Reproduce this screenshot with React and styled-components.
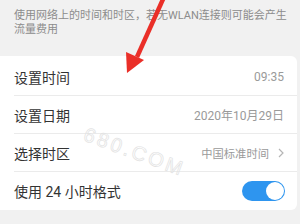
import React, { useState } from 'react';
import styled, { createGlobalStyle } from 'styled-components';

const GlobalStyle = createGlobalStyle`
  html, body {
    margin: 0;
    padding: 0;
    background: #f1f1f1;
  }
  body {
    font-family: Roboto, "Noto Sans CJK SC", sans-serif;
  }
`;

const Page = styled.div`
  position: relative;
  width: 300px;
  height: 224px;
  overflow: hidden;
  background: #f1f1f1;
`;

const Desc = styled.p`
  margin: 0;
  padding: 9px 14px 0;
  font-size: 11px;
  line-height: 13.5px;
  color: #8c8c8c;
  white-space: nowrap;
`;

const Card = styled.div`
  margin: 20px 3px 0 0;
  padding-top: 2px;
  background: #fff;
  border-radius: 0 6px 6px 0;
`;

const Row = styled.div`
  display: flex;
  align-items: center;
  justify-content: space-between;
  height: 38px;
  margin-left: 14px;
  padding-right: 13px;
  box-sizing: border-box;
  border-bottom: ${(p) => (p.$last ? 'none' : '1px solid #ebebeb')};
`;

const Label = styled.span`
  font-size: 14px;
  color: #333;
`;

const Value = styled.span`
  display: flex;
  align-items: center;
  gap: 9px;
  font-size: ${(p) => (p.$small ? '11.3px' : '12px')};
  color: #9a9a9a;
`;

const Toggle = styled.button`
  position: relative;
  width: 43px;
  height: 20px;
  margin-right: -1px;
  padding: 0;
  border: none;
  border-radius: 10px;
  background: ${(p) => (p.$on ? '#2e95ef' : '#ccc')};
  cursor: pointer;

  &::after {
    content: '';
    position: absolute;
    top: 1px;
    left: ${(p) => (p.$on ? '24px' : '1px')};
    width: 18px;
    height: 18px;
    border-radius: 50%;
    background: #fff;
  }
`;

const Watermark = styled.div`
  position: absolute;
  left: 88px;
  top: 124px;
  font-family: "Liberation Sans", sans-serif;
  font-size: 20px;
  line-height: 20px;
  letter-spacing: 3px;
  color: transparent;
  -webkit-text-stroke: 0.7px #e2e2e2;
  transform: rotate(20deg);
  transform-origin: 0 0;
  pointer-events: none;
`;

const Overlay = styled.svg`
  position: absolute;
  left: 0;
  top: 0;
  pointer-events: none;
`;

const Chevron = () => (
  <svg width="6" height="10" viewBox="0 0 6 10">
    <path d="M1 1l4 4-4 4" fill="none" stroke="#b5b5b5" strokeWidth="1.2" />
  </svg>
);

const App = () => {
  const [use24, setUse24] = useState(true);
  return (
    <Page>
      <GlobalStyle />
      <Desc>
        使用网络上的时间和时区，若无WLAN连接则可能会产生
        <br />
        流量费用
      </Desc>
      <Card>
        <Row>
          <Label>设置时间</Label>
          <Value>09:35</Value>
        </Row>
        <Row>
          <Label>设置日期</Label>
          <Value>2020年10月29日</Value>
        </Row>
        <Row>
          <Label>选择时区</Label>
          <Value $small>
            中国标准时间
            <Chevron />
          </Value>
        </Row>
        <Row $last>
          <Label>使用 24 小时格式</Label>
          <Toggle $on={use24} onClick={() => setUse24(!use24)} />
        </Row>
      </Card>
      <Watermark>680.COM</Watermark>
      <Overlay width="300" height="224">
        <line x1="164" y1="-3" x2="137" y2="57" stroke="#ea2f28" strokeWidth="4.5" />
        <polygon points="127,73 126,52 144,60" fill="#ea2f28" />
      </Overlay>
    </Page>
  );
};

export default App;
